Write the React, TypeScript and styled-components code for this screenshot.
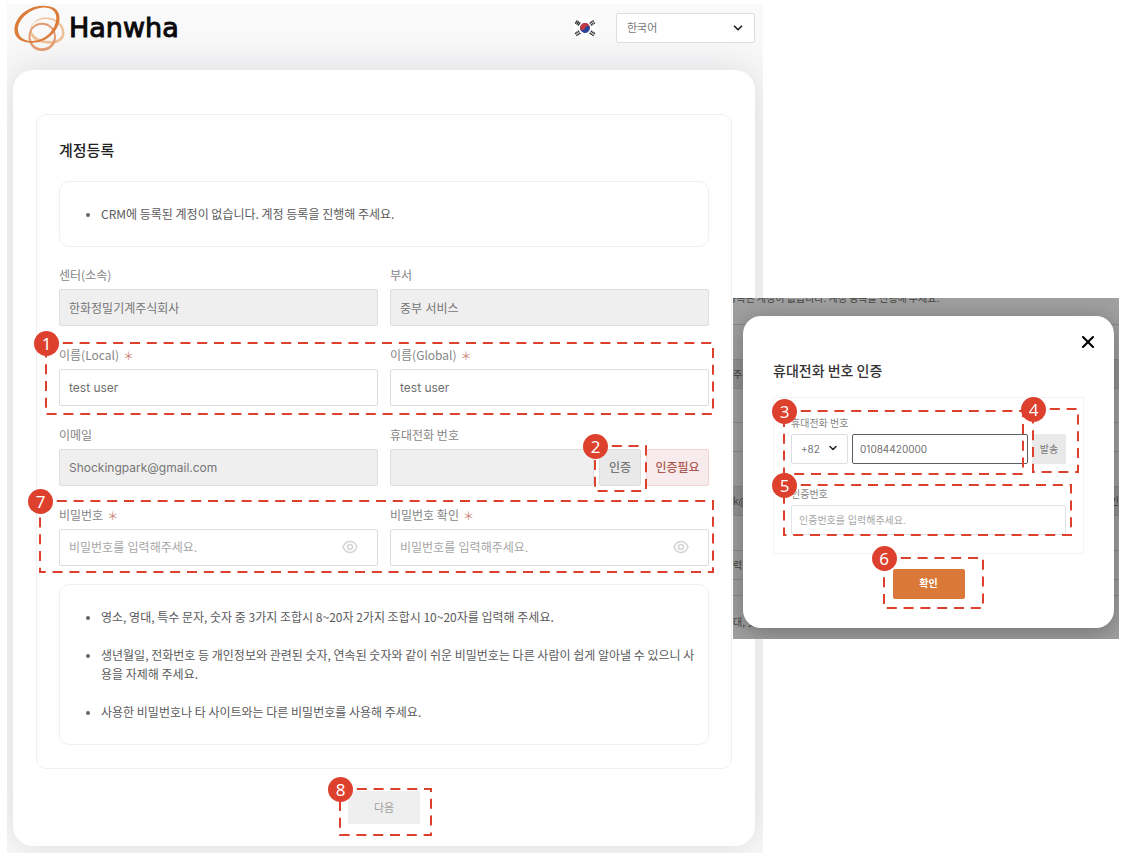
import React, { useId } from "react";
import styled, { createGlobalStyle } from "styled-components";
import { ChevronDown, X } from "lucide-react";

const KR = `"Noto Sans CJK KR", "Noto Sans", sans-serif`;
const MIXED = `Inter, "Noto Sans CJK KR", sans-serif`;
const RED = "#dd402d";

const GlobalStyle = createGlobalStyle`
  *, *::before, *::after { box-sizing: border-box; }
  body { margin: 0; background: #fff; font-family: ${KR}; font-size: 12px; color: #666; }
  button, input, select { font: inherit; color: inherit; margin: 0; }
  h1, h2, ul { margin: 0; padding: 0; }
`;

const Board = styled.main`
  display: flex;
  align-items: flex-start;
  padding: 4px 2px 2px 7px;
`;

/* ---------- numbered callouts ---------- */

const Marked = styled.div<{ $grow?: boolean }>`
  position: relative;
  flex: ${(p) => (p.$grow ? "1 1 0" : "0 0 auto")};
  min-width: 0;
`;

const CalloutFrame = styled.div<{ $inset: string }>`
  position: absolute;
  inset: ${(p) => p.$inset};
  z-index: 2;
  pointer-events: none;

  svg {
    display: block;
    width: 100%;
    height: 100%;
    overflow: visible;
  }
`;

const Badge = styled.span`
  position: absolute;
  top: -12px;
  left: -12px;
  width: 25px;
  height: 25px;
  border-radius: 50%;
  background: ${RED};
  color: #fff;
  font: 17px/25px "Noto Sans", sans-serif;
  text-align: center;
`;

function Callout({ n, inset }: { n: number; inset: string }) {
  return (
    <CalloutFrame $inset={inset}>
      <svg aria-hidden="true">
        <rect
          width="100%"
          height="100%"
          fill="none"
          stroke={RED}
          strokeWidth="2"
          strokeDasharray="10 6.8"
        />
      </svg>
      <Badge>{n}</Badge>
    </CalloutFrame>
  );
}

/* ---------- registration page ---------- */

const Sheet = styled.section`
  flex: 1 1 0;
  min-width: 0;
  padding: 0 8px 7px 6px;
  overflow: hidden;
  background: #f9f9f9;
`;

const Header = styled.header`
  display: flex;
  align-items: center;
  gap: 19px;
  padding-bottom: 18px;
  height: 66px;
`;

const Logo = styled.a`
  display: flex;
  align-items: center;
  gap: 4px;
  margin-right: auto;
  padding-left: 1px;
  color: #0a0a0a;
  font: 27px/40px "DejaVu Sans", sans-serif;
  -webkit-text-stroke: 1px #0a0a0a;
  text-decoration: none;
`;

const SelectBox = styled.div<{ $w: number; $pad: number }>`
  position: relative;
  flex: none;
  width: ${(p) => p.$w}px;

  select {
    display: block;
    width: 100%;
    height: 30px;
    padding: 0 ${(p) => p.$pad}px;
    appearance: none;
    border: 1px solid #dcdee2;
    border-radius: 2px;
    background: #fff;
    color: #777;
    font-family: ${MIXED};
    font-size: ${(p) => (p.$pad > 9 ? 11 : 10)}px;
  }

  svg {
    position: absolute;
    right: ${(p) => p.$pad}px;
    top: 8px;
    color: #222;
    pointer-events: none;
  }
`;

const Card = styled.div`
  display: flex;
  flex-direction: column;
  align-items: center;
  padding: 44px 23px 22px;
  border-radius: 20px;
  background: #fff;
  box-shadow: 0 0 40px rgba(70, 80, 105, 0.18);
`;

const Panel = styled.div`
  width: 100%;
  margin-bottom: 22px;
  padding: 24px 22px 23px;
  border: 1px solid #f0f0f0;
  border-radius: 10px;
`;

const PageTitle = styled.h1`
  margin-bottom: 20px;
  color: #222;
  font-size: 15px;
  font-weight: 500;
  line-height: 22px;
`;

const Notice = styled.ul`
  display: flex;
  flex-direction: column;
  gap: 19px;
  padding: 22px 12px 23px 26px;
  border: 1px solid #f0f0f0;
  border-radius: 10px;
  list-style: none;
  color: #5a5a5a;
  line-height: 19px;

  li {
    display: flex;
    gap: 11px;
  }

  li::before {
    content: "";
    flex: none;
    width: 4px;
    height: 4px;
    margin-top: 9px;
    border-radius: 50%;
    background: #666;
  }
`;

const Fields = styled.div`
  display: flex;
  flex-direction: column;
  gap: 16px;
  padding: 15px 0 18px;
`;

const Row = styled.div`
  position: relative;
  display: grid;
  grid-template-columns: 1fr 1fr;
  gap: 12px;
`;

const Label = styled.label`
  display: block;
  margin-bottom: 1px;
  color: #858585;
  line-height: 26px;
`;

const Star = styled.span`
  margin-left: 4px;
  color: #cb8377;
  font-size: 11px;
`;

const Control = styled.div`
  display: flex;
  gap: 5px;
  position: relative;
`;

const TextInput = styled.input`
  flex: 1 1 0;
  min-width: 0;
  width: 100%;
  height: 37px;
  padding: 0 9px;
  border: 1px solid #dcdee2;
  border-radius: 2px;
  background: #fff;
  color: #707070;
  font-family: ${MIXED};
  outline: none;

  &::placeholder { color: #a6a6a6; opacity: 1; }
  &:disabled { background: #efefef; color: #757575; opacity: 1; }
`;

const EyeButton = styled.button`
  position: absolute;
  right: 20px;
  top: 10px;
  width: 16px;
  height: 16px;
  padding: 0;
  border: 0;
  background: none;
  color: #d2d2d2;

  svg { display: block; }
`;

const VerifyButton = styled.button`
  width: 42px;
  height: 37px;
  padding: 0 0 2px;
  border: 1px solid #dedede;
  border-radius: 2px;
  background: #e9e9e9;
  color: #777;
  font-weight: 500;
`;

const Status = styled.output`
  width: 63px;
  height: 37px;
  border: 1px solid #f1d3d5;
  border-radius: 2px;
  background: #f8ebed;
  color: #ad5a50;
  font-weight: 500;
  line-height: 34px;
  text-align: center;
`;

const NextButton = styled.button`
  display: block;
  width: 72px;
  height: 33px;
  padding: 0 0 2px;
  border: 0;
  border-radius: 2px;
  background: #efefef;
  color: #a0a0a0;
  font-size: 11px;
`;

interface FieldProps {
  label: string;
  value?: string;
  placeholder?: string;
  required?: boolean;
  disabled?: boolean;
  secret?: boolean;
  children?: React.ReactNode;
}

function EyeIcon() {
  return (
    <svg width="16" height="16" viewBox="0 0 16 16" fill="none" stroke="currentColor" aria-hidden="true">
      <path strokeWidth="1.4" d="M1 8C2.500 4.500 5 2.500 8 2.500C11 2.500 13.500 4.500 15 8C13.500 11.500 11 13.500 8 13.500C5 13.500 2.500 11.500 1 8Z" />
      <circle strokeWidth="1.4" cx="8" cy="8" r="2.500" />
    </svg>
  );
}

function Field({ label, value, placeholder, required, disabled, secret, children }: FieldProps) {
  const id = useId();
  return (
    <div>
      <Label htmlFor={id}>
        {label}
        {required && <Star>＊</Star>}
      </Label>
      <Control>
        <TextInput
          id={id}
          type={secret ? "password" : "text"}
          defaultValue={value}
          placeholder={placeholder}
          required={required}
          disabled={disabled}
        />
        {secret && (
          <EyeButton type="button" aria-label="비밀번호 표시">
            <EyeIcon />
          </EyeButton>
        )}
        {children}
      </Control>
    </div>
  );
}

function HanwhaMark() {
  return (
    <svg width="51" height="46" viewBox="0 0 51 46" fillRule="evenodd" aria-hidden="true">
      <path
        fill="#efbf95"
        d="M16 27C16 18 24 12 33 12.500C43 13 50.500 20 50.500 28C50.500 34.500 45 38.800 37 38.800C27 38.800 16.500 35 16 27ZM17.500 25C18 31.500 28 36.500 37 36C43 36 48 33 48 28C48 20.500 41 14.500 33 14C24 13.500 17 18 17.500 25Z"
      />
      <path
        fill="#e29a70"
        d="M28 17.700C36 17.700 42 24 42 32C42 40 36 46 28 46C20 46 14.500 40 14.500 32C14.500 24 20 17.700 28 17.700ZM28 19.700C21 19.700 16.500 25 16.500 31C16.500 38 21 43.300 28 43.300C35 43.300 40 38 40 31C40 25 35 19.700 28 19.700Z"
      />
      <path
        fill="#dc7a37"
        d="M28 .8C38 .5 45.500 4 45.500 13C45.500 25 34 37.700 18 37.700C6 37.700 -.5 32 .5 23C2 12 13 1.500 28 .8ZM29 2.500C17 3.500 6 12 4 22C3 31 9 36 18 36C31 36 41.500 25 42.300 14C42.800 6 37 2 29 2.500Z"
      />
    </svg>
  );
}

function Trigram({ x, y, turn, split }: { x: number; y: number; turn: number; split?: boolean }) {
  return (
    <g transform={`translate(${x} ${y}) rotate(${turn})`} stroke="#333" strokeWidth="1.4">
      {[-1.7, 0, 1.7].map((d) => (
        <path key={d} d={`M-2 ${d}H2`} strokeDasharray={split ? "1.700 .6" : undefined} />
      ))}
    </g>
  );
}

function KoreaFlag() {
  return (
    <svg width="24" height="24" viewBox="0 0 24 24" role="img" aria-label="대한민국">
      <circle cx="12" cy="12" r="12" fill="#fff" />
      <g transform="rotate(10 12 12)">
        <circle cx="12" cy="12" r="5" fill="#2d449b" />
        <path
          d="M7 12a5 5 0 0 1 10 0a2.500 2.500 0 0 0-5 0a2.500 2.500 0 0 1-5 0Z"
          fill="#c23a41"
        />
      </g>
      <Trigram x={4.7} y={7} turn={-56} />
      <Trigram x={19.3} y={7} turn={56} split />
      <Trigram x={4.7} y={17.3} turn={56} split />
      <Trigram x={19.3} y={17.3} turn={-56} split />
    </svg>
  );
}

function RegistrationPage() {
  return (
    <Sheet>
      <Header>
        <Logo href="#">
          <HanwhaMark />
          Hanwha
        </Logo>
        <KoreaFlag />
        <SelectBox $w={139} $pad={10}>
          <select aria-label="언어" defaultValue="ko">
            <option value="ko">한국어</option>
          </select>
          <ChevronDown size={14} strokeWidth={3} />
        </SelectBox>
      </Header>
      <Card>
        <Panel>
          <PageTitle>계정등록</PageTitle>
          <Notice>
            <li>CRM에 등록된 계정이 없습니다. 계정 등록을 진행해 주세요.</li>
          </Notice>
          <Fields>
            <Row>
              <Field label="센터(소속)" value="한화정밀기계주식회사" disabled />
              <Field label="부서" value="중부 서비스" disabled />
            </Row>
            <Row>
              <Field label="이름(Local)" value="test user" required />
              <Field label="이름(Global)" value="test user" required />
              <Callout n={1} inset="1px -4px -8px -13px" />
            </Row>
            <Row>
              <Field label="이메일" value="Shockingpark@gmail.com" disabled />
              <Field label="휴대전화 번호" disabled>
                <Marked>
                  <VerifyButton type="button">인증</VerifyButton>
                  <Callout n={2} inset="-3px -5px -5px -4px" />
                </Marked>
                <Status>인증필요</Status>
              </Field>
            </Row>
            <Row>
              <Field label="비밀번호" placeholder="비밀번호를 입력해주세요." required secret />
              <Field label="비밀번호 확인" placeholder="비밀번호를 입력해주세요." required secret />
              <Callout n={7} inset="-1px -4px -6px -19px" />
            </Row>
          </Fields>
          <Notice>
            <li>영소, 영대, 특수 문자, 숫자 중 3가지 조합시 8~20자 2가지 조합시 10~20자를 입력해 주세요.</li>
            <li>
              생년월일, 전화번호 등 개인정보와 관련된 숫자, 연속된 숫자와 같이 쉬운 비밀번호는 다른 사람이 쉽게 알아낼 수
              있으니 사용을 자제해 주세요.
            </li>
            <li>사용한 비밀번호나 타 사이트와는 다른 비밀번호를 사용해 주세요.</li>
          </Notice>
        </Panel>
        <Marked>
          <NextButton type="button">다음</NextButton>
          <Callout n={8} inset="-2px -11px -11px -8px" />
        </Marked>
      </Card>
    </Sheet>
  );
}

/* ---------- phone verification popup ---------- */

const Popup = styled.section`
  position: relative;
  z-index: 3;
  flex: 0 0 386px;
  margin: 294px 0 0 -30px;
  padding: 18px 5px 11px 10px;
  overflow: hidden;
  background: #a0a0a0;
`;

const Backdrop = styled.div`
  position: absolute;
  inset: 0;
  display: flex;
  flex-direction: column;
  color: #444;
  font-size: 10px;
  white-space: nowrap;
`;

const BackLine = styled.div<{ $h: number; $fill?: boolean }>`
  display: flex;
  justify-content: space-between;
  flex: none;
  height: ${(p) => p.$h}px;
  border-bottom: 1px solid #8a8a8a;
  background: ${(p) => (p.$fill ? "#939393" : "none")};
  line-height: ${(p) => p.$h - 2}px;
`;

const BackText = styled.div`
  margin: -8px 0 0 -6px;
  line-height: 16px;
`;

const Dialog = styled.div`
  position: relative;
  display: flex;
  flex-direction: column;
  align-items: center;
  padding: 16px 30px 29px;
  border-radius: 18px;
  background: #fff;
  box-shadow: 0 4px 24px rgba(0, 0, 0, 0.3);
`;

const CloseButton = styled.button`
  align-self: flex-end;
  width: 20px;
  height: 20px;
  margin: 0 -14px 8px 0;
  padding: 0;
  border: 0;
  background: none;
  color: #000;

  svg { display: block; }
`;

const DialogTitle = styled.h2`
  align-self: stretch;
  margin-bottom: 17px;
  color: #333;
  font-size: 14px;
  font-weight: 500;
  line-height: 20px;
`;

const DialogPanel = styled.div`
  display: flex;
  flex-direction: column;
  gap: 20px;
  width: 100%;
  margin-bottom: 15px;
  padding: 15px 17px 18px;
  border: 1px solid #f3f3f3;
`;

const SmallLabel = styled.label`
  display: block;
  margin-bottom: 1px;
  color: #858585;
  font-size: 10px;
  line-height: 20px;
`;

const Line = styled.div`
  display: flex;
  align-items: flex-end;
  gap: 4px;
`;

const SmallInput = styled(TextInput)<{ $active?: boolean }>`
  display: block;
  height: 30px;
  padding: 0 7px;
  border-color: ${(p) => (p.$active ? "#5c5e63" : "#e2e4e9")};
  font-size: 10px;
`;

const SendButton = styled.button`
  display: block;
  width: 34px;
  height: 30px;
  padding: 0 0 2px;
  border: 0;
  border-radius: 2px;
  background: #e9e9e9;
  color: #777;
  font-size: 10px;
`;

const ConfirmButton = styled.button`
  display: block;
  width: 72px;
  height: 30px;
  padding: 0 0 3px;
  border: 0;
  border-radius: 2px;
  background: #da783a;
  color: #fff;
  font-size: 10px;
  font-weight: 700;
`;

function VerifyPopup() {
  return (
    <Popup>
      <Backdrop aria-hidden="true">
        <BackText>등록된 계정이 없습니다. 계정 등록을 진행해 주세요.</BackText>
        <BackLine $h={19} />
        <BackLine $h={35} />
        <BackLine $h={29} $fill>주식</BackLine>
        <BackLine $h={34} />
        <BackLine $h={29} />
        <BackLine $h={35} />
        <BackLine $h={29} $fill>
          <span>k@</span>
          <span>인</span>
        </BackLine>
        <BackLine $h={35} />
        <BackLine $h={29}>력하</BackLine>
        <BackLine $h={16} />
        <BackLine $h={54}>대, 숫</BackLine>
      </Backdrop>
      <Dialog role="dialog" aria-labelledby="verify-title">
        <CloseButton type="button" aria-label="닫기">
          <X size={20} strokeWidth={2.5} />
        </CloseButton>
        <DialogTitle id="verify-title">휴대전화 번호 인증</DialogTitle>
        <DialogPanel>
          <Line>
            <Marked $grow>
              <SmallLabel htmlFor="phone">휴대전화 번호</SmallLabel>
              <Line>
                <SelectBox $w={57} $pad={9}>
                  <select aria-label="국가 번호" defaultValue="82">
                    <option value="82">+82</option>
                  </select>
                  <ChevronDown size={12} strokeWidth={3} />
                </SelectBox>
                <SmallInput id="phone" type="tel" defaultValue="01084420000" $active autoFocus />
              </Line>
              <Callout n={3} inset="-2px 5px -10px -7px" />
            </Marked>
            <Marked>
              <SendButton type="button">발송</SendButton>
              <Callout n={4} inset="-25px -12px -8px 1px" />
            </Marked>
          </Line>
          <Marked>
            <SmallLabel htmlFor="code">인증번호</SmallLabel>
            <SmallInput id="code" placeholder="인증번호를 입력해주세요." />
            <Callout n={5} inset="1px -5px 0 -7px" />
          </Marked>
        </DialogPanel>
        <Marked>
          <ConfirmButton type="button">확인</ConfirmButton>
          <Callout n={6} inset="-11px -18px -9px -9px" />
        </Marked>
      </Dialog>
    </Popup>
  );
}

export default function App() {
  return (
    <>
      <GlobalStyle />
      <Board>
        <RegistrationPage />
        <VerifyPopup />
      </Board>
    </>
  );
}
